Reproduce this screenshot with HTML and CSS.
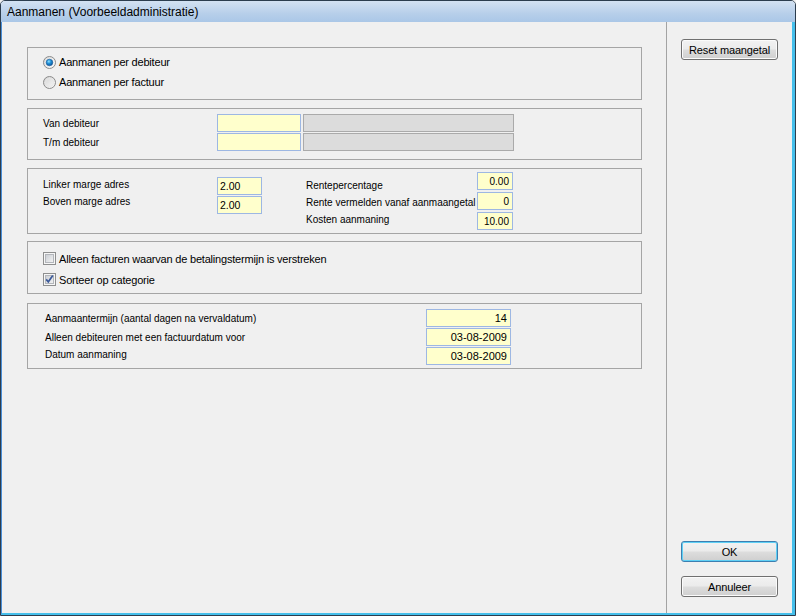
FILE: index.html
```html
<!DOCTYPE html>
<html>
<head>
<meta charset="utf-8">
<link rel="stylesheet" href="styles.css">
</head>
<body>
<div class="window">
  <div class="titlebar">Aanmanen (Voorbeeldadministratie)</div>
  <div class="client">
    <div class="main">
      <div class="group g1">
        <div class="opt">
          <svg class="ctl" width="13" height="13" viewBox="0 0 13 13">
            <defs>
              <linearGradient id="rb1" x1="0" y1="0" x2="1" y2="1"><stop offset="0" stop-color="#d8d8d8"/><stop offset="1" stop-color="#fdfdfd"/></linearGradient>
              <radialGradient id="dot1" cx="0.4" cy="0.35" r="0.7"><stop offset="0" stop-color="#8fe0ff"/><stop offset="0.45" stop-color="#1f8fd6"/><stop offset="1" stop-color="#0b4d91"/></radialGradient>
            </defs>
            <circle cx="6.5" cy="6.5" r="6" fill="url(#rb1)" stroke="#8b8b8b"/>
            <circle cx="6.5" cy="6.5" r="3.3" fill="url(#dot1)" stroke="#1b5e9e" stroke-width="0.6"/>
          </svg>
          <span>Aanmanen per debiteur</span>
        </div>
        <div class="opt">
          <svg class="ctl" width="13" height="13" viewBox="0 0 13 13">
            <defs>
              <linearGradient id="rb2" x1="0" y1="0" x2="1" y2="1"><stop offset="0" stop-color="#d2d2d2"/><stop offset="1" stop-color="#fbfbfb"/></linearGradient>
            </defs>
            <circle cx="6.5" cy="6.5" r="6" fill="url(#rb2)" stroke="#8b8b8b"/>
            <circle cx="6.5" cy="6.5" r="4" fill="none" stroke="#e6e6e6" stroke-width="0.8"/>
          </svg>
          <span>Aanmanen per factuur</span>
        </div>
      </div>

      <div class="group g2">
        <div class="row">
          <span class="lbl lbl-wide">Van debiteur</span>
          <span class="field yellow w-code"></span>
          <span class="field gray w-name"></span>
        </div>
        <div class="row">
          <span class="lbl lbl-wide">T/m debiteur</span>
          <span class="field yellow w-code"></span>
          <span class="field gray w-name"></span>
        </div>
      </div>

      <div class="group g3">
        <div class="col col-a">
          <span class="lbl">Linker marge adres</span>
          <span class="lbl">Boven marge adres</span>
        </div>
        <div class="col col-b">
          <span class="field yellow w-small">2.00</span>
          <span class="field yellow w-small">2.00</span>
        </div>
        <div class="col col-c">
          <span class="lbl">Rentepercentage</span>
          <span class="lbl">Rente vermelden vanaf aanmaangetal</span>
          <span class="lbl">Kosten aanmaning</span>
        </div>
        <div class="col col-d">
          <span class="field yellow num w-tiny">0.00</span>
          <span class="field yellow num w-tiny">0</span>
          <span class="field yellow num w-tiny">10.00</span>
        </div>
      </div>

      <div class="group g4">
        <div class="opt chk">
          <svg class="ctl" width="13" height="13" viewBox="0 0 13 13">
            <defs>
              <linearGradient id="cb1" x1="0" y1="0" x2="1" y2="1"><stop offset="0" stop-color="#c9cdd3"/><stop offset="1" stop-color="#f4f4f4"/></linearGradient>
            </defs>
            <rect x="0.5" y="0.5" width="12" height="12" fill="#f6f6f6" stroke="#8e8f8f"/>
            <rect x="2.5" y="2.5" width="8" height="8" fill="url(#cb1)" stroke="#b3b6bb"/>
          </svg>
          <span>Alleen facturen waarvan de betalingstermijn is verstreken</span>
        </div>
        <div class="opt chk">
          <svg class="ctl" width="13" height="13" viewBox="0 0 13 13">
            <defs>
              <linearGradient id="cb2" x1="0" y1="0" x2="1" y2="1"><stop offset="0" stop-color="#c9cdd3"/><stop offset="1" stop-color="#f4f4f4"/></linearGradient>
            </defs>
            <rect x="0.5" y="0.5" width="12" height="12" fill="#f6f6f6" stroke="#8e8f8f"/>
            <rect x="2.5" y="2.5" width="8" height="8" fill="url(#cb2)" stroke="#b3b6bb"/>
            <path d="M3.2 6.4 L5.3 8.8 L9.8 2.6" fill="none" stroke="#3c5a9a" stroke-width="1.7"/>
          </svg>
          <span>Sorteer op categorie</span>
        </div>
      </div>

      <div class="group g5">
        <div class="row">
          <span class="lbl lbl-long">Aanmaantermijn (aantal dagen na vervaldatum)</span>
          <span class="field yellow num w-date">14</span>
        </div>
        <div class="row">
          <span class="lbl lbl-long">Alleen debiteuren met een factuurdatum voor</span>
          <span class="field yellow num w-date">03-08-2009</span>
        </div>
        <div class="row">
          <span class="lbl lbl-long lbl-up">Datum aanmaning</span>
          <span class="field yellow num w-date">03-08-2009</span>
        </div>
      </div>
    </div>

    <div class="side">
      <button class="btn">Reset maangetal</button>
      <button class="btn default push">OK</button>
      <button class="btn">Annuleer</button>
    </div>
  </div>
</div>
</body>
</html>
```

FILE: styles.css
```css
html, body {
  margin: 0;
  padding: 0;
  background: #f0f0f0;
}

.window {
  box-sizing: border-box;
  width: 796px;
  height: 616px;
  border: 1px solid #2c3d4e;
  border-radius: 5px 5px 0 0;
  overflow: hidden;
  display: flex;
  flex-direction: column;
  background: #f0f0f0;
  font-family: "Liberation Sans", Arial, sans-serif;
  color: #000;
}

.titlebar {
  height: 21px;
  flex: none;
  background: linear-gradient(#d3e2f2, #b7cfea 60%, #aac7e7);
  font-size: 12px;
  line-height: 22px;
  padding-left: 6px;
  color: #000;
}

.client {
  flex: 1;
  display: flex;
  border-left: 1px solid #4a8fd8;
  border-right: 3px solid #45bfeb;
  border-bottom: 2px solid #45bfeb;
  min-height: 0;
}

.main {
  width: 665px;
  flex: none;
  border-right: 1px solid #a3a3a3;
  padding-top: 25px;
  box-sizing: border-box;
}

.side {
  flex: 1;
  display: flex;
  flex-direction: column;
  align-items: flex-start;
  padding: 17px 0 16px 14px;
}

.group {
  box-sizing: border-box;
  margin-left: 25px;
  width: 615px;
  border: 1px solid #a5a5a5;
}

.g1 { padding: 4px 0 7px 15px; }
.g2 { margin-top: 8px; padding: 5px 0 8px 15px; display: flex; flex-direction: column; gap: 1px; }
.g3 { margin-top: 8px; height: 66px; display: flex; align-items: flex-start; padding-left: 15px; }
.g4 { margin-top: 7px; padding: 6px 0 3px 15px; }
.g5 { margin-top: 9px; padding: 5px 0 3px 17px; display: flex; flex-direction: column; gap: 1px; }

.opt {
  display: flex;
  align-items: center;
  height: 20px;
  font-size: 11px;
  letter-spacing: -0.2px;
}
.opt.chk { height: 21px; }
.ctl { flex: none; margin-right: 3px; display: block; }

.row {
  display: flex;
  align-items: center;
  height: 18px;
}

.lbl {
  font-size: 10px;
  line-height: 17px;
  white-space: nowrap;
  display: block;
}
.lbl-wide { width: 174px; }
.lbl-long { width: 381px; }
.lbl-up { position: relative; top: -2px; }

.col { display: flex; flex-direction: column; }
.col-a { width: 174px; margin-top: 7px; }
.col-b { width: 45px; margin-top: 8px; gap: 1px; }
.col-c { width: 171px; margin-left: 44px; margin-top: 8px; }
.col-d { width: 36px; margin-top: 3px; gap: 2px; }

.field {
  box-sizing: border-box;
  height: 18px;
  font-size: 10px;
  line-height: 17px;
  padding: 0 2px;
  white-space: nowrap;
  display: block;
}
.yellow {
  background: #ffffcc;
  border: 1px solid #9db7e3;
}
.gray {
  background: #dcdcdc;
  border: 1px solid #aaaaaa;
}
.num { text-align: right; padding-right: 3px; }

.w-code { width: 84px; }
.w-name { width: 211px; margin-left: 2px; }
.w-small { width: 45px; font-size: 10.5px; }
.w-tiny { width: 36px; }
.w-date { width: 85px; font-size: 11px; }

.btn {
  box-sizing: border-box;
  width: 97px;
  height: 21px;
  margin: 0;
  padding: 0;
  font-family: "Liberation Sans", Arial, sans-serif;
  font-size: 11px;
  letter-spacing: -0.15px;
  color: #000;
  border: 1px solid #707070;
  border-radius: 3px;
  background: linear-gradient(#f2f2f2 0%, #ebebeb 48%, #dddddd 52%, #cfcfcf 100%);
  box-shadow: inset 0 0 0 1px #fbfbfb;
}
.btn.default {
  border-color: #3c7fb1;
  box-shadow: inset 0 0 0 1px #5fd0f5;
}
.push { margin-top: auto; margin-bottom: 14px; }
```
